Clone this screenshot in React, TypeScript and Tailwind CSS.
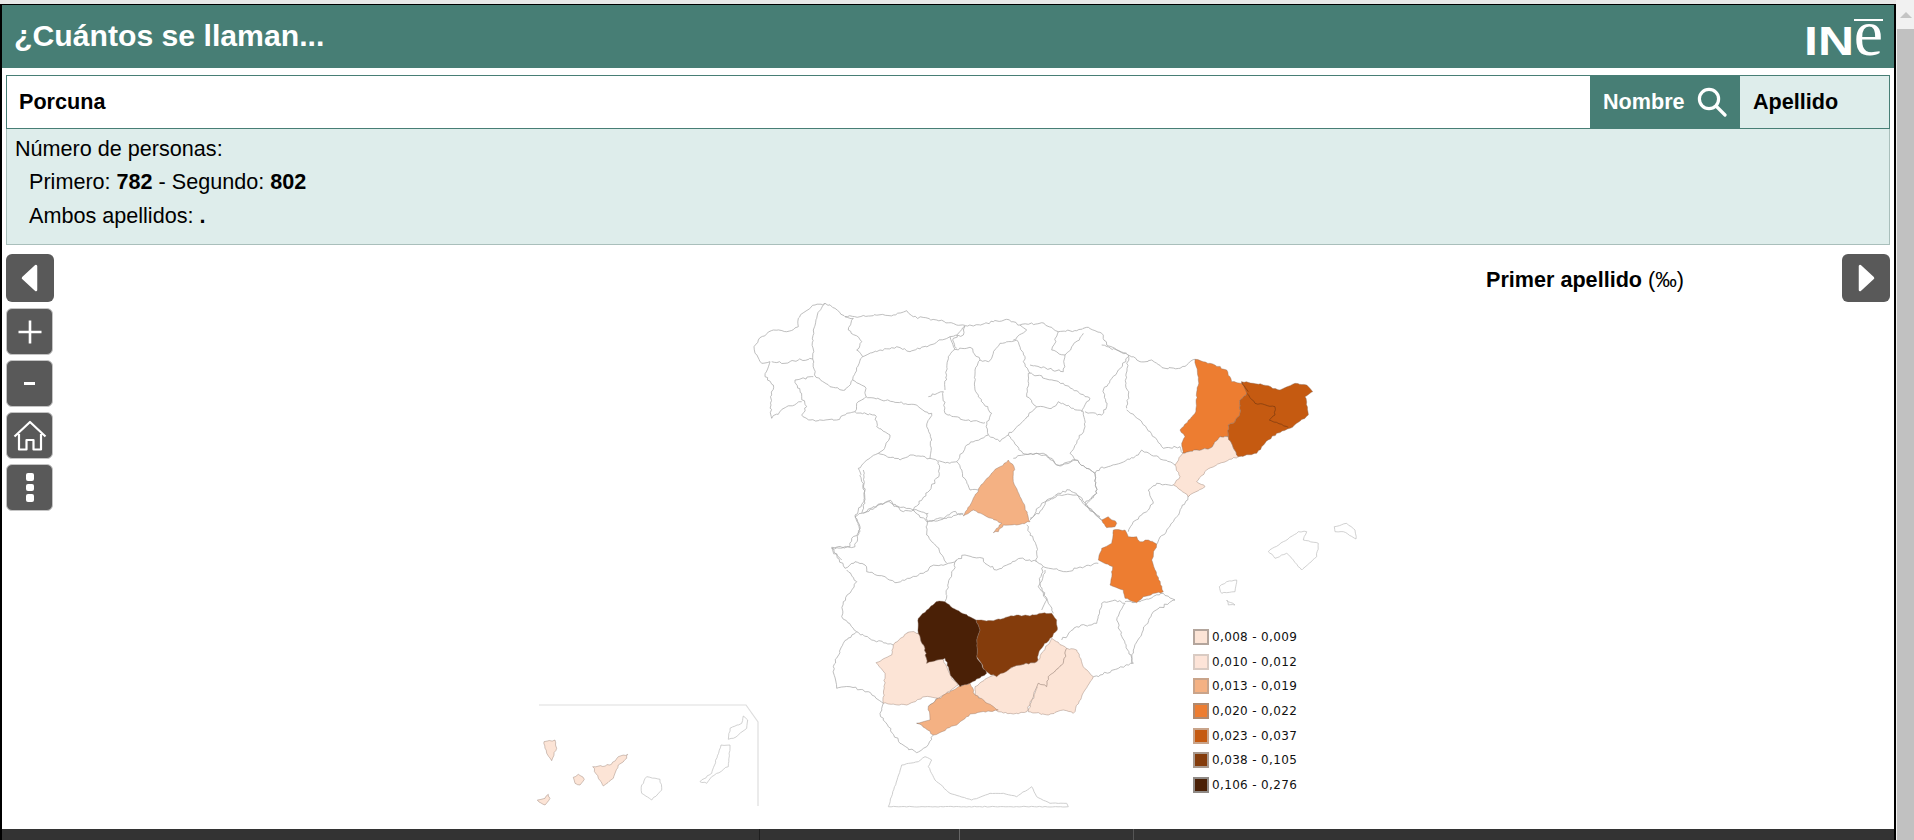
import type { ReactNode } from "react";

type Frame = [number, number];

// the map traces were read off crops of the picture, 3x, each with its own origin
const Z4: Frame = [730, 290];
const Z5: Frame = [1000, 340];
const Z6: Frame = [800, 570];
const Z7: Frame = [520, 690];
const Z8: Frame = [820, 470];

function noise(a: number, b: number) {
  const s = Math.sin(a * 12.9898 + b * 78.233) * 43758.5453;
  return s - Math.floor(s) - 0.5;
}

function jag(frame: Frame, pts: string, closed = false, amp = 2.2) {
  const p = pts
    .trim()
    .split(/\s+/)
    .map((t) => t.split(",").map(Number))
    .map(([x, y]) => [frame[0] + x / 3, frame[1] + y / 3]);
  let d = `M${p[0][0].toFixed(1)} ${p[0][1].toFixed(1)}`;
  const list = closed ? [...p, p[0]] : p;
  for (let i = 1; i < list.length; i++) {
    const [x0, y0] = list[i - 1];
    const [x1, y1] = list[i];
    const n = Math.max(1, Math.round(Math.hypot(x1 - x0, y1 - y0) / 2.6));
    for (let j = 1; j <= n; j++) {
      const t = j / n;
      const x = x0 + (x1 - x0) * t;
      const y = y0 + (y1 - y0) * t;
      const k = j === n ? 0 : amp;
      d += `L${(x + noise(x, y) * k).toFixed(1)} ${(y + noise(y, x) * k).toFixed(1)}`;
    }
  }
  return closed ? d + "Z" : d;
}

const LIGHT = "#fce4d6";
const PEACH = "#f4b183";
const ORANGE = "#ed7d31";
const RUST = "#c55a11";
const BROWN = "#843c0c";
const DARK = "#4a2006";

const LINES: [Frame, string][] = [
  // north coast and Galicia
  [Z4, "125,385 123,345 125,315 130,285 105,260 120,215 95,220 75,190 72,170 85,150 130,120 170,125 205,110 205,85 225,65 255,45 285,40 315,55 345,80 420,78 490,75 530,62 550,80 620,90 680,105 730,108 790,95 830,88 870,105 935,98 985,125 1040,122 1075,112 1115,130 1130,165 1190,190"],
  [Z4, "125,215 165,220 205,210 248,207"],
  [Z4, "285,40 262,75 250,120 248,207 258,262 300,290 345,300 368,270"],
  [Z4, "345,80 370,85 355,120 395,155 380,180 398,200 375,250 368,270"],
  [Z4, "195,270 250,260"],
  [Z4, "125,385 170,350 215,335"],
  [Z4, "195,270 215,320 230,350 215,375 240,390 320,390 350,370 375,365"],
  [Z4, "368,270 405,290 408,320 380,340 375,365"],
  [Z4, "375,365 435,375 440,410 480,435 460,480 445,490 410,510 385,535 400,580 405,640 395,670 375,680 390,710 375,770 305,772 335,810"],
  // Castilla y León
  [Z4, "398,200 450,180 500,170 540,185 600,165 660,140 675,178"],
  [Z4, "705,108 700,135 660,140"],
  [Z4, "408,320 490,335 560,345 585,365"],
  [Z4, "675,178 655,200 645,300"],
  [Z4, "595,320 640,305 645,370 700,390 765,398"],
  [Z4, "675,178 720,172 750,210 735,240 735,300 760,340 785,370 770,395 775,435 810,455"],
  [Z4, "585,365 605,370 590,410 605,450 600,505"],
  [Z4, "445,490 510,510 550,495 600,505 625,515"],
  [Z4, "775,435 710,465 680,515 660,520 625,512"],
  [Z4, "625,515 628,550 600,600 550,660 500,650 480,630 400,670"],
  [Z4, "550,660 590,695 640,685 700,670"],
  [Z4, "680,515 720,600 745,600"],
  [Z4, "810,455 835,435 878,490"],
  [Z4, "835,435 915,355 940,350 965,355 985,335 1030,355 1060,365"],
  [Z4, "878,490 950,495 980,525 1035,510 1095,550"],
  [Z4, "1060,365 1065,410 1040,460 1020,490 1035,510"],
  [Z4, "750,210 775,215 790,190 810,160 860,150 885,200 880,215 900,250"],
  [Z4, "895,250 1000,280 1080,325 1055,365"],
  [Z4, "895,250 890,320 920,350"],
  [Z4, "705,108 668,150 680,175"],
  [Z4, "850,150 890,120 870,105"],
  [Z4, "985,125 965,180 1005,195 1000,245 900,225"],
  [Z4, "1005,195 1060,130"],
  [Z4, "1195,200 1165,240 1120,300 1130,350 1115,375 1065,365"],
  [Z4, "1095,550 1100,610 1065,640"],
  [Z4, "900,685 935,660 950,630 985,610 1020,600 1050,620 1065,640 1115,690"],
  // centre and Extremadura
  [Z8, "125,130 205,92 250,125 280,120 325,130"],
  [Z8, "320,130 320,195 350,230 380,280"],
  [Z8, "325,155 360,150 400,125 430,135"],
  [Z8, "620,165 650,230 650,275"],
  [Z8, "35,235 75,295"],
  [Z8, "35,235 90,230 95,205 120,185 105,135 135,90 130,0"],
  [Z8, "75,295 105,275 135,285 140,305 195,320 225,338 270,325 310,310 330,290 385,280 410,270"],
  [Z8, "410,270 435,255 490,265 495,280 530,300 600,265 650,275 670,290 740,305 770,295 835,280"],
  [Z8, "410,270 385,340 375,395"],
  [Z8, "630,150 665,100 720,75 770,75 800,110 845,150"],
  // Aragón and the east coast
  [Z5, "570,465 530,530 500,570 470,612"],
  [Z5, "520,435 470,430 445,450 460,490 425,525 400,545 385,575"],
  [Z5, "525,375 490,360 425,330 415,345 360,370 300,385 285,400 290,460 255,495 300,530"],
  [Z5, "285,400 225,360 180,378 130,340 70,345 40,355"],
  [Z5, "380,210 420,240 440,265 490,325 540,320 548,340"],
  [Z5, "305,15 385,45 420,65 455,60 495,85 540,85 585,58"],
  [Z5, "385,45 378,130 385,165 380,205"],
  [Z5, "130,680 115,740 140,780 125,810"],
  // south
  [Z6, "100,290 130,220 170,185 215,210 280,225"],
  [Z6, "100,290 110,355 150,350 205,365 250,400"],
  [Z6, "250,400 240,430 265,470 300,520 350,548 380,530 400,495"],
  [Z6, "350,460 365,465"],
  [Z6, "385,410 415,385"],
  [Z6, "170,185 125,140 130,95 170,35 140,0"],
  [Z6, "320,190 355,190"],
  [Z6, "760,130 745,100 720,40 735,0"],
  [Z6, "785,210 830,170 890,160 905,100 945,90 975,100 950,150 975,220 1000,280 900,315 880,320"],
  [Z6, "975,95 1020,95 1090,70 1125,90 1060,125 1030,180 1000,240 995,280"],
];

const ISLES: [Frame, string][] = [
  [Z5, "805,635 850,605 895,575 920,575 910,600 955,610 950,650 905,690 860,640 825,655"],
  [Z5, "1003,560 1040,550 1065,570 1068,597 1030,575 1005,575"],
  [Z5, "658,740 680,725 710,720 705,755 665,760"],
  [Z5, "680,780 705,795 685,795"],
  [Z7, "380,260 420,268 425,300 395,330 365,310 365,285"],
  [Z7, "603,165 630,165 625,230 575,260 560,280 540,275 575,250"],
  [Z7, "670,78 683,90 680,115 640,145 625,148 630,115 665,100"],
];

const FILLED: [Frame, string, string][] = [
  [Z4, "835,510 852,530 850,575 870,620 885,650 900,695 860,705 820,705 805,725 790,728 815,700 770,680 730,660 700,678 730,625 750,590 790,545", PEACH],
  [Z5, "305,540 325,530 350,550 345,560 320,563", ORANGE],
  [Z5, "340,570 375,570 385,590 410,590 420,605 445,600 470,612 455,660 490,755 430,770 410,788 375,775 370,750 330,735 338,680 295,660 305,625 335,610", ORANGE],
  [Z5, "585,58 630,70 680,90 695,125 740,135 740,160 720,180 720,220 705,245 685,255 685,290 660,290 630,325 590,330 548,340 545,310 555,290 540,270 585,220 595,120", ORANGE],
  [Z5, "548,340 590,330 630,325 660,290 685,290 715,350 660,370 620,390 590,425 615,440 565,470 530,440 520,435 540,410 525,375", LIGHT],
  [Z5, "725,125 760,130 790,135 840,150 885,130 920,135 938,155 915,170 925,225 870,265 830,280 795,310 770,340 715,350 685,290 685,255 705,245 720,220 720,180 740,160", RUST],
  [Z6, "335,185 355,190 375,235 380,280 425,265 440,290 455,325 475,345 415,385 375,380 320,405 250,400 255,310 228,278 275,255 280,225 320,190", LIGHT],
  [Z6, "525,350 570,320 640,290 710,275 755,205 800,235 790,280 745,320 740,350 715,340 680,425 640,432 595,425 525,375", LIGHT],
  [Z6, "800,235 830,240 850,290 880,320 855,360 820,430 790,420 745,435 685,425 715,340 740,350 745,320 790,280", LIGHT],
  [Z6, "510,340 525,375 595,420 510,432 470,465 400,495 365,465 350,460 390,450 385,410 415,385 480,348", PEACH],
  [Z6, "528,150 580,152 625,140 650,135 690,138 725,130 755,130 770,150 772,180 750,205 720,240 710,275 640,290 590,320 560,305 530,260 530,210 540,180", BROWN],
  [Z6, "408,95 435,95 470,120 528,150 540,180 530,210 530,260 560,310 510,340 480,350 455,320 435,265 380,280 375,235 355,190 355,145 380,120", DARK],
  [Z7, "72,155 105,150 110,175 95,212 80,190", LIGHT],
  [Z7, "160,262 175,253 193,268 180,285 165,280", LIGHT],
  [Z7, "218,230 270,225 295,200 323,193 320,205 295,225 280,265 250,288 235,265", LIGHT],
  [Z7, "52,330 75,325 85,313 90,325 75,345", LIGHT],
];

const LEGEND = [
  { label: "0,008 - 0,009", className: "bg-[#fce4d6] border-[#b3a59c]" },
  { label: "0,010 - 0,012", className: "bg-[#fde4d8] border-[#d9cbc3]" },
  { label: "0,013 - 0,019", className: "bg-[#f4b183] border-[#c9a48a]" },
  { label: "0,020 - 0,022", className: "bg-[#ed7d31] border-[#b08a70]" },
  { label: "0,023 - 0,037", className: "bg-[#c55a11] border-[#c9a48a]" },
  { label: "0,038 - 0,105", className: "bg-[#843c0c] border-[#a89a90]" },
  { label: "0,106 - 0,276", className: "bg-[#4a2006] border-[#8f8a86]" },
];

function ToolButton({ children, big }: { children: ReactNode; big?: boolean }) {
  return (
    <button
      className={`flex items-center justify-center rounded-[6px] bg-[#595959] ${
        big ? "h-[48px] w-[48px]" : "h-[47px] w-[47px] border border-[#c4c4c4]"
      }`}
    >
      {children}
    </button>
  );
}

function SpainMap() {
  return (
    <svg viewBox="54 245 1788 584" className="absolute inset-0 h-full w-full">
      {LINES.map(([f, pts], i) => (
        <path key={i} d={jag(f, pts)} fill="none" stroke="#a8a8a8" strokeWidth="0.75" />
      ))}
      {ISLES.map(([f, pts], i) => (
        <path key={i} d={jag(f, pts, true, 1.2)} fill="#fff" stroke="#bdbdbd" strokeWidth="0.7" />
      ))}
      {FILLED.map(([f, pts, fill], i) => (
        <path key={i} d={jag(f, pts, true, 1.6)} fill={fill} stroke="#8a7264" strokeWidth="0.4" />
      ))}
      <path d={jag(Z5, "740,160 765,190 825,200 825,225 808,240 865,262", false, 1.4)} fill="none" stroke="#7a3a10" strokeWidth="0.7" />
      <path d={jag(Z5, "725,125 745,155", false, 1.4)} fill="none" stroke="#7a3a10" strokeWidth="0.7" />
      {/* inset frame for the Canaries and Ceuta */}
      <path d="M539 705H746L758 722V806" fill="none" stroke="#dedede" strokeWidth="1.2" />
      <path
        d={jag(Z6, "265,710 305,585 355,575 375,560 395,570 385,590 405,630 450,670 515,690 570,670 610,670 650,680 695,650 710,680 750,700 800,700 805,710 265,710", false, 0.7)}
        fill="none"
        stroke="#cfcfcf"
        strokeWidth="1"
      />
    </svg>
  );
}

export default function App() {
  return (
    <div className="flex h-screen w-full overflow-hidden bg-white font-['Liberation_Sans',Arial,sans-serif] text-black">
      <div className="flex w-[1896px] flex-col bg-[#e8e8e8] pt-[4px]">
        <div className="flex min-h-0 flex-1 flex-col border-x-2 border-t border-black bg-white">
          {/* Header */}
          <div className="flex h-[63px] shrink-0 items-center justify-between bg-[#477e75] pl-[12px] pr-[11px]">
            <h1 className="text-[30.2px] font-bold leading-none text-white">¿Cuántos se llaman...</h1>
            <div className="flex items-baseline text-white">
              <span className="inline-block w-[50px] origin-left scale-x-125 text-[40px] font-bold leading-[40px]">IN</span>
              <span className="relative font-['Liberation_Serif',serif] text-[66px] leading-[40px]">
                e
                <span className="absolute left-0 right-0 top-[6px] h-[2px] bg-white" />
              </span>
            </div>
          </div>

          {/* Search */}
          <div className="mx-[4px] mt-[7px] shrink-0 border border-[#477e75] border-b-0">
            <div className="flex h-[53px] border-b border-[#477e75] bg-[#deedeb]">
              <div className="flex flex-1 items-center bg-white pl-[12px] text-[21.6px] font-bold">Porcuna</div>
              <button className="flex w-[150px] items-center gap-[12px] bg-[#477e75] pl-[13px] text-[21.6px] font-bold text-white">
                Nombre
                <svg width="30" height="30" viewBox="0 0 30 30" fill="none" stroke="#fff" strokeWidth="3.2" strokeLinecap="round">
                  <circle cx="12" cy="12" r="9.6" />
                  <path d="M19.5 19.5 28 28" />
                </svg>
              </button>
              <button className="w-[149px] pl-[13px] text-left text-[21.6px] font-bold">Apellido</button>
            </div>
          </div>
          <div className="mx-[4px] h-[116px] shrink-0 border-x border-b border-[#a9bfbb] bg-[#deedeb] pl-[8px] pt-[6px] text-[21.6px] leading-[34px]">
            <p className="mb-[2px] leading-[28px]">Número de personas:</p>
            <p className="pl-[14px]">
              Primero: <b>782</b> - Segundo: <b>802</b>
            </p>
            <p className="pl-[14px]">
              Ambos apellidos: <b>.</b>
            </p>
          </div>

          {/* Map area */}
          <div className="flex min-h-0 flex-1 pl-[4px] pr-[4px] pt-[9px]">
            <div className="flex w-[48px] shrink-0 flex-col gap-[5px]">
              <div className="mb-[1px]">
                <ToolButton big>
                  <svg width="20" height="30" viewBox="0 0 20 30">
                    <path d="M16 3v24L3 15Z" fill="#fff" stroke="#fff" strokeWidth="2.5" strokeLinejoin="round" />
                  </svg>
                </ToolButton>
              </div>
              <ToolButton>
                <svg width="26" height="26" viewBox="0 0 26 26" stroke="#fff" strokeWidth="2.6">
                  <path d="M13 1.5v23M1.5 13h23" />
                </svg>
              </ToolButton>
              <ToolButton>
                <span className="block h-[3px] w-[11px] bg-white" />
              </ToolButton>
              <ToolButton>
                <svg width="34" height="32" viewBox="0 0 34 32" fill="none" stroke="#fff" strokeWidth="2.2" strokeLinejoin="round">
                  <path d="M1.5 16.5 17 2l15.5 14.5M6 14v15.5h7.5V20h7v9.5H28V14" />
                </svg>
              </ToolButton>
              <ToolButton>
                <span className="flex flex-col gap-[3px]">
                  <span className="block h-[7.5px] w-[8px] rounded-[2px] bg-white" />
                  <span className="block h-[7.5px] w-[8px] rounded-[2px] bg-white" />
                  <span className="block h-[7.5px] w-[8px] rounded-[2px] bg-white" />
                </span>
              </ToolButton>
            </div>

            <div className="relative -mt-[9px] min-w-0 flex-1">
              <SpainMap />
              <div className="relative flex justify-end pr-[158px] pt-[23px] text-[21.6px] font-bold leading-[24px]">
                <span>
                  Primer apellido <span className="font-normal">(‰)</span>
                </span>
              </div>
              <div className="absolute left-[1139px] top-[384px] flex flex-col font-['DejaVu_Sans',Verdana,sans-serif] text-[12px] tracking-[0.35px] text-[#111]">
                {LEGEND.map((row) => (
                  <div key={row.label} className="flex h-[24.7px] items-start gap-[3px]">
                    <span className={`h-[16px] w-[16px] border-2 ${row.className}`} />
                    <span className="leading-[16px]">{row.label}</span>
                  </div>
                ))}
              </div>
            </div>

            <div className="w-[48px] shrink-0">
              <ToolButton big>
                <svg width="20" height="30" viewBox="0 0 20 30">
                  <path d="M4 3v24l13-12Z" fill="#fff" stroke="#fff" strokeWidth="2.5" strokeLinejoin="round" />
                </svg>
              </ToolButton>
            </div>
          </div>

          {/* Footer, cut off by the window */}
          <div className="flex h-[11px] shrink-0 bg-[#333333]">
            <div className="w-[758px] border-r border-[#1f1f1f]" />
            <div className="w-[200px] border-r border-[#666666]" />
            <div className="w-[174px] border-r border-[#555555]" />
          </div>
        </div>
      </div>

      {/* Scrollbar */}
      <div className="flex w-[18px] flex-col bg-[#f1f1f1] pl-[1px]">
        <div className="flex h-[29px] shrink-0 items-center justify-center">
          <span className="h-0 w-0 border-x-[6px] border-b-[6px] border-x-transparent border-b-[#c4c4c4]" />
        </div>
        <div className="flex-1 bg-[#c1c1c1]" />
      </div>
    </div>
  );
}
